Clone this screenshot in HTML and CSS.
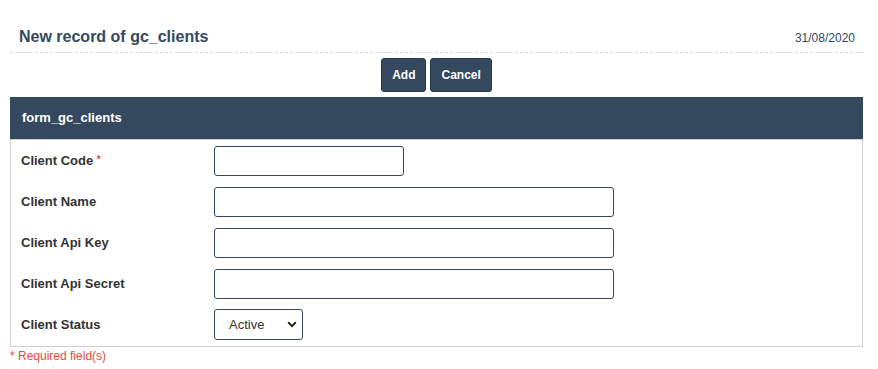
FILE: index.html
```html
<!DOCTYPE html>
<html>
<head>
<meta charset="utf-8">
<link rel="stylesheet" href="styles.css">
</head>
<body>
<div class="page">
  <div class="topbar">
    <span class="title">New record of gc_clients</span>
    <span class="date">31/08/2020</span>
  </div>
  <div class="toolbar">
    <button class="btn">Add</button>
    <button class="btn">Cancel</button>
  </div>
  <div class="panel">
    <div class="panel-head">form_gc_clients</div>
    <div class="row">
      <label class="lbl">Client Code <span class="req">*</span></label>
      <input class="field short" type="text">
    </div>
    <div class="row">
      <label class="lbl">Client Name</label>
      <input class="field long" type="text">
    </div>
    <div class="row">
      <label class="lbl">Client Api Key</label>
      <input class="field long" type="text">
    </div>
    <div class="row">
      <label class="lbl">Client Api Secret</label>
      <input class="field long" type="text">
    </div>
    <div class="row">
      <label class="lbl">Client Status</label>
      <div class="sel-wrap">
        <select class="sel"><option>Active</option><option>Inactive</option></select>
        <svg class="chev" width="10" height="7" viewBox="0 0 10 7"><path d="M1.2 1.3 L5 5.1 L8.8 1.3" fill="none" stroke="#222" stroke-width="2"/></svg>
      </div>
    </div>
  </div>
  <div class="required">* Required field(s)</div>
</div>
</body>
</html>
```

FILE: styles.css
```css
html, body {
  margin: 0;
  padding: 0;
  background: #fff;
}
body {
  font-family: "Liberation Sans", Arial, sans-serif;
  color: #333;
}
.page {
  width: 853px;
  margin-left: 10px;
}
.topbar {
  display: flex;
  align-items: center;
  justify-content: space-between;
  padding: 27px 8px 5px 9px;
  height: 20px;
  line-height: 20px;
  border-bottom: 1px dashed #dcdcdc;
}
.title {
  font-size: 16px;
  font-weight: bold;
  color: #34495e;
}
.date {
  font-size: 12px;
  color: #34495e;
  margin-top: 1px;
}
.toolbar {
  display: flex;
  justify-content: center;
  gap: 4px;
  margin-top: 5px;
}
.btn {
  height: 34px;
  padding: 0 10px;
  background: #34495e;
  border: 1px solid #2a3b4c;
  border-radius: 3px;
  color: #fff;
  font-family: "Liberation Sans", Arial, sans-serif;
  font-size: 12px;
  font-weight: bold;
  cursor: pointer;
}
.panel {
  margin-top: 5px;
  border: 1px solid #cfcfcf;
  border-top: none;
  padding-bottom: 1px;
}
.panel-head {
  background: #34495e;
  color: #fff;
  font-size: 13px;
  font-weight: bold;
  height: 42px;
  line-height: 42px;
  padding-left: 12px;
  margin: 0 -1px;
  border-bottom: 1px solid #cfcfcf;
}
.row {
  display: flex;
  align-items: center;
  height: 41px;
  padding-left: 10px;
}
.lbl {
  width: 193px;
  font-size: 13px;
  font-weight: bold;
  color: #333;
}
.req {
  color: #e74c3c;
  font-size: 10px;
  vertical-align: 2px;
}
.field {
  box-sizing: border-box;
  height: 30px;
  border: 1px solid #34495e;
  border-radius: 3px;
  margin: 0;
  padding: 0 6px;
  font-family: "Liberation Sans", Arial, sans-serif;
  font-size: 13px;
}
.short { width: 190px; }
.long { width: 400px; }
.sel-wrap {
  position: relative;
  width: 89px;
  height: 31px;
}
.sel {
  appearance: none;
  -webkit-appearance: none;
  box-sizing: border-box;
  width: 89px;
  height: 31px;
  margin: 0;
  border: 1px solid #34495e;
  border-radius: 3px;
  background: #fff;
  padding: 0 0 0 14px;
  font-family: "Liberation Sans", Arial, sans-serif;
  font-size: 13px;
  color: #333;
}
.chev {
  position: absolute;
  right: 6px;
  top: 12px;
  pointer-events: none;
}
.required {
  color: #e74c3c;
  font-size: 12px;
  margin-top: 2px;
  line-height: 14px;
}
```
